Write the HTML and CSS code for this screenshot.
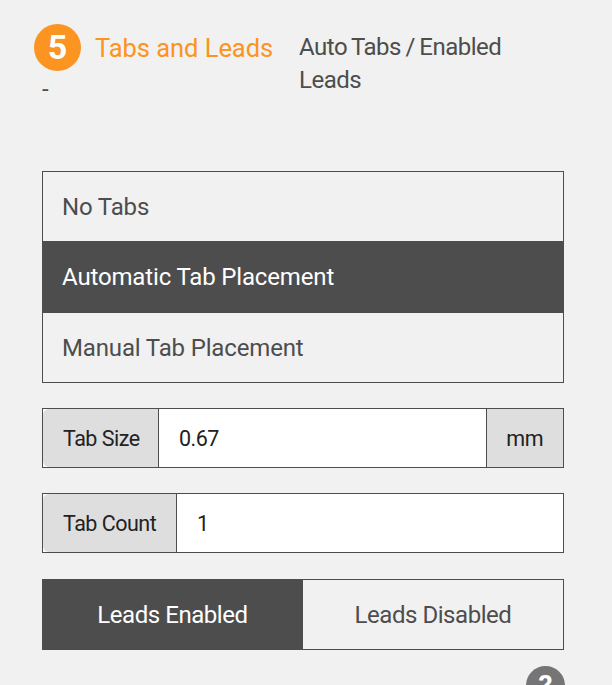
FILE: index.html
```html
<!DOCTYPE html>
<html lang="en">
<head>
<meta charset="utf-8">
<title>Tabs and Leads</title>
<link rel="stylesheet" href="styles.css">
</head>
<body>
<main class="panel">
  <header class="head">
    <div class="head-left">
      <div class="step-row">
        <span class="step">5</span>
        <h2 class="title">Tabs and Leads</h2>
      </div>
      <div class="dash">-</div>
    </div>
    <p class="summary">Auto Tabs / Enabled Leads</p>
  </header>
  <div class="options">
    <div class="option">No Tabs</div>
    <div class="option selected">Automatic Tab Placement</div>
    <div class="option">Manual Tab Placement</div>
  </div>
  <div class="field">
    <span class="addon addon-left addon-size">Tab Size</span>
    <span class="value">0.67</span>
    <span class="addon addon-right">mm</span>
  </div>
  <div class="field">
    <span class="addon addon-left addon-count">Tab Count</span>
    <span class="value">1</span>
  </div>
  <div class="toggle">
    <div class="toggle-item on">Leads Enabled</div>
    <div class="toggle-item">Leads Disabled</div>
  </div>
  <span class="help">?</span>
</main>
</body>
</html>
```
FILE: styles.css
```css
* { box-sizing: border-box; }
html, body { height: 100%; }
body {
  margin: 0;
  background: #f1f1f1;
  font-family: Roboto, "Liberation Sans", sans-serif;
  color: #4d4d4d;
  overflow: hidden;
}
.panel {
  position: relative;
  height: 685px;
  padding: 24px 48px 0 42px;
}
.head { display: flex; height: 147px; }
.head-left { width: 257px; }
.step-row { display: flex; align-items: flex-start; gap: 14px; margin-left: -8px; }
.step {
  width: 47px; height: 47px; border-radius: 50%;
  background: #fb9420; color: #fff;
  font-size: 34px; font-weight: 700; line-height: 47px; text-align: center;
}
.title { margin: 0; font-size: 25.5px; font-weight: 400; color: #fb9420; letter-spacing: -0.05px; line-height: 48px; }
.dash { font-size: 24px; line-height: 24px; margin-top: 5px; }
.summary { margin: 7px 0 0; font-size: 24px; line-height: 33px; width: 230px; letter-spacing: -0.5px; word-spacing: -1px; }
.options { border: 1px solid #4d4d4d; height: 212px; display: flex; flex-direction: column; margin-bottom: 25px; }
.option { flex: 1; display: flex; align-items: center; padding-left: 19px; font-size: 24px; letter-spacing: -0.15px; }
.option.selected { background: #4d4d4d; color: #fff; margin: 0 -1px; padding-left: 20px; flex: 0 0 72px; }
.field { display: flex; height: 60px; border: 1px solid #4d4d4d; margin-bottom: 25px; background: #fff; color: #222; font-size: 21.5px; letter-spacing: -0.5px; }
.addon { background: #dedede; display: flex; align-items: center; flex-shrink: 0; white-space: nowrap; padding: 0 0 0 20px; }
.addon-left { border-right: 1px solid #4d4d4d; border-radius: 6px 0 0 6px; }
.addon-size { width: 116px; }
.addon-count { width: 134px; }
.addon-right { border-left: 1px solid #4d4d4d; padding: 0 20px 0 19px; }
.value { flex: 1; display: flex; align-items: center; padding-left: 20px; }
.toggle { display: flex; height: 71px; border: 1px solid #4d4d4d; margin-top: 26px; font-size: 24px; letter-spacing: -0.45px; }
.toggle-item { flex: 1; display: flex; align-items: center; justify-content: center; }
.toggle-item.on { background: #4d4d4d; color: #fff; flex: 0 0 261px; margin: -1px 0 -1px -1px; }
.help {
  position: absolute; left: 526px; top: 666px;
  width: 39px; height: 39px; border-radius: 50%;
  background: #757575; color: #fff;
  font-size: 28px; font-weight: 700; line-height: 39px; text-align: center;
}
```
